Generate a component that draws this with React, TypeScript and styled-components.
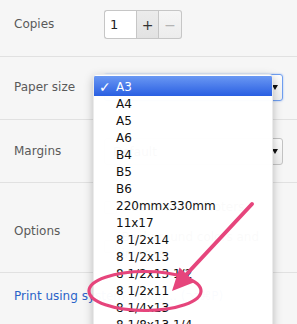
import React from "react";
import styled, { createGlobalStyle } from "styled-components";

const GlobalStyle = createGlobalStyle`
  html, body { margin: 0; padding: 0; }
  body {
    background: #f6f6f6;
    font-family: "DejaVu Sans", "Liberation Sans", sans-serif;
    font-size: 12px;
  }
`;

const Sidebar = styled.div`
  position: relative;
  width: 297px;
  height: 324px;
  overflow: hidden;
  background: #f6f6f6;
`;

const Section = styled.div<{ $pt: number; $h: number; $last?: boolean }>`
  box-sizing: border-box;
  height: ${(p) => p.$h}px;
  padding-top: ${(p) => p.$pt}px;
  border-bottom: ${(p) => (p.$last ? "none" : "1px solid #e1e1e1")};
`;

const Row = styled.div`
  display: grid;
  grid-template-columns: 104px 1fr;
  align-items: center;
`;

const Label = styled.div`
  padding-left: 14px;
  color: #5a5a5a;
  font-size: 12px;
  line-height: 17px;
`;

const Spinner = styled.div`
  display: flex;
  height: 29px;
`;

const CountInput = styled.div`
  box-sizing: border-box;
  width: 32px;
  height: 29px;
  background: #fff;
  border: 1px solid #c6c6c6;
  border-right: none;
  border-radius: 3px 0 0 3px;
  padding: 6px 0 0 5px;
  font-size: 13px;
  color: #222;
`;

const StepButton = styled.div<{ $disabled?: boolean; $last?: boolean }>`
  box-sizing: border-box;
  width: 23px;
  height: 29px;
  display: flex;
  align-items: center;
  justify-content: center;
  border: 1px solid #c6c6c6;
  border-left: ${(p) => (p.$last ? "none" : "1px solid #c6c6c6")};
  border-radius: ${(p) => (p.$last ? "0 3px 3px 0" : "0")};
  background: ${(p) =>
    p.$disabled
      ? "linear-gradient(#f6f6f6, #ececec)"
      : "linear-gradient(#ececec, #e2e2e2)"};
  color: ${(p) => (p.$disabled ? "#b4b4b4" : "#333")};
  font-size: 14px;
`;

const Select = styled.div<{ $focused?: boolean }>`
  box-sizing: border-box;
  width: 179px;
  height: 27px;
  display: flex;
  align-items: center;
  justify-content: space-between;
  padding: 0 4px 0 8px;
  border-radius: 3px;
  border: 1px solid ${(p) => (p.$focused ? "#6f9ef0" : "#c3c3c3")};
  background: linear-gradient(#fdfdfd, #efefef);
  box-shadow: ${(p) => (p.$focused ? "0 0 2px rgba(80,140,240,0.6)" : "none")};
  color: #333;
`;

const Caret = styled.span`
  width: 0;
  height: 0;
  border-left: 3px solid transparent;
  border-right: 3px solid transparent;
  border-top: 5px solid #111;
`;

const OptionList = styled.div`
  display: flex;
  flex-direction: column;
  gap: 13px;
`;

const CheckRow = styled.div`
  display: flex;
  align-items: center;
  gap: 5px;
  line-height: 17px;
  color: #444;
`;

const Box = styled.span`
  box-sizing: border-box;
  width: 13px;
  height: 13px;
  border: 1px solid #b9b9b9;
  border-radius: 2px;
  background: #fff;
`;

const Link = styled.div`
  padding-left: 14px;
  line-height: 17px;
  color: #2a63c9;
  white-space: nowrap;
`;

const Popup = styled.div`
  position: absolute;
  left: 93px;
  top: 74px;
  width: 180px;
  height: 260px;
  box-sizing: border-box;
  padding-top: 1px;
  background: rgba(255, 255, 255, 0.975);
  border: 1px solid rgba(0, 0, 0, 0.08);
  border-radius: 4px 4px 0 0;
  box-shadow: 0 3px 10px rgba(0, 0, 0, 0.25);
  overflow: hidden;
`;

const Item = styled.div<{ $selected?: boolean }>`
  display: flex;
  height: ${(p) => (p.$selected ? 20 : 17)}px;
  box-sizing: border-box;
  padding-top: ${(p) => (p.$selected ? 3 : 0)}px;
  line-height: 17px;
  font-size: 12px;
  color: ${(p) => (p.$selected ? "#fff" : "#111")};
  background: ${(p) =>
    p.$selected ? "linear-gradient(#6a98f3, #2a5fe2)" : "transparent"};
  white-space: nowrap;
`;

const Check = styled.span`
  width: 17px;
  padding-left: 5px;
  font-size: 14px;
  font-weight: bold;
`;

const Annotation = styled.svg`
  position: absolute;
  left: 0;
  top: 0;
  pointer-events: none;
`;

const sizes = [
  "A3",
  "A4",
  "A5",
  "A6",
  "B4",
  "B5",
  "B6",
  "220mmx330mm",
  "11x17",
  "8 1/2x14",
  "8 1/2x13",
  "8 1/2x13 1/2",
  "8 1/2x11",
  "8 1/4x13",
  "8 1/8x13 1/4",
  "8x10",
];

export default function App() {
  return (
    <Sidebar>
      <GlobalStyle />
      <Section $pt={10} $h={57}>
        <Row>
          <Label>Copies</Label>
          <Spinner>
            <CountInput>1</CountInput>
            <StepButton>+</StepButton>
            <StepButton $disabled $last>
              −
            </StepButton>
          </Spinner>
        </Row>
      </Section>
      <Section $pt={17} $h={63}>
        <Row>
          <Label>Paper size</Label>
          <Select $focused>
            <span>A3</span>
            <Caret />
          </Select>
        </Row>
      </Section>
      <Section $pt={18} $h={63}>
        <Row>
          <Label>Margins</Label>
          <Select>
            <span>Default</span>
            <Caret />
          </Select>
        </Row>
      </Section>
      <Section $pt={16} $h={90}>
        <Row>
          <Label>Options</Label>
          <OptionList>
            <CheckRow>
              <Box />
              Headers and footers
            </CheckRow>
            <CheckRow>
              <Box />
              Background colors and images
            </CheckRow>
          </OptionList>
        </Row>
      </Section>
      <Section $pt={15} $h={51} $last>
        <Link>Print using system dialog... (⌥⌘P)</Link>
      </Section>

      <Popup>
        {sizes.map((s, i) => (
          <Item key={s} $selected={i === 0}>
            <Check>{i === 0 ? "✓" : ""}</Check>
            {s}
          </Item>
        ))}
      </Popup>

      <Annotation width={297} height={324} viewBox="0 0 297 324">
        <ellipse
          cx={145}
          cy={291}
          rx={56}
          ry={19.5}
          fill="none"
          stroke="#e6457c"
          strokeWidth={3.2}
        />
        <line
          x1={252}
          y1={204}
          x2={184}
          y2={277}
          stroke="#e6457c"
          strokeWidth={4}
          strokeLinecap="round"
        />
        <polygon points="172,291 179.5,267.5 195,282" fill="#e6457c" />
      </Annotation>
    </Sidebar>
  );
}
